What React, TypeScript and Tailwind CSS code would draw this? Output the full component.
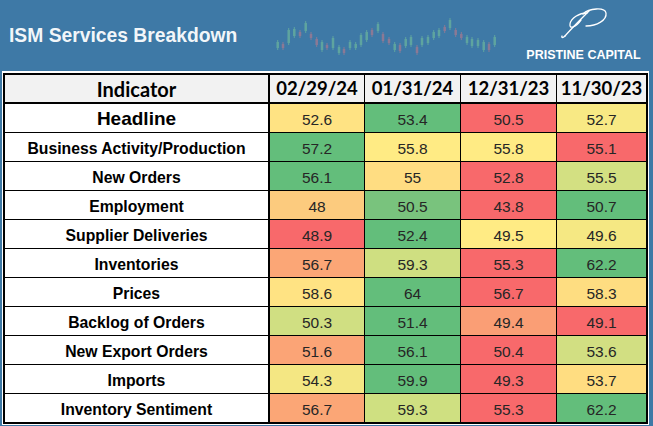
import React from "react";

type Cell = [string, string];
type Row = { label: string; big?: boolean; vals: Cell[] };

const G = "#63BE7B";
const R = "#F8696B";
const Y = "#FFEB84";

const rows: Row[] = [
  { label: "Headline", big: true, vals: [["52.6", "#FFE383"], ["53.4", G], ["50.5", R], ["52.7", "#F8E984"]] },
  { label: "Business Activity/Production", vals: [["57.2", G], ["55.8", Y], ["55.8", Y], ["55.1", R]] },
  { label: "New Orders", vals: [["56.1", G], ["55", "#FFDD82"], ["52.8", R], ["55.5", "#D3E082"]] },
  { label: "Employment", vals: [["48", "#FCCB7E"], ["50.5", "#79C37D"], ["43.8", R], ["50.7", G]] },
  { label: "Supplier Deliveries", vals: [["48.9", R], ["52.4", G], ["49.5", Y], ["49.6", "#F5E883"]] },
  { label: "Inventories", vals: [["56.7", "#FBA676"], ["59.3", "#CFDF81"], ["55.3", R], ["62.2", G]] },
  { label: "Prices", vals: [["58.6", "#FFE383"], ["64", G], ["56.7", R], ["58.3", "#FEDD81"]] },
  { label: "Backlog of Orders", vals: [["50.3", "#D0DF82"], ["51.4", G], ["49.4", "#FA9E75"], ["49.1", R]] },
  { label: "New Export Orders", vals: [["51.6", "#FBA476"], ["56.1", G], ["50.4", R], ["53.6", "#D2DF82"]] },
  { label: "Imports", vals: [["54.3", "#F4E783"], ["59.9", G], ["49.3", R], ["53.7", "#FFDD81"]] },
  { label: "Inventory Sentiment", vals: [["56.7", "#FBA676"], ["59.3", "#CFE081"], ["55.3", R], ["62.2", G]] },
];

const dates = ["02/29/24", "01/31/24", "12/31/23", "11/30/23"];

const candles: [number, number, number, number][] = [
  [277.7, 40, 50, 0], [283, 42, 50, 1], [288.7, 28, 45, 0], [294.3, 27, 38, 0], [300, 30, 38, 1],
  [305.7, 21, 33, 0], [311, 32, 40, 1], [316.7, 37, 47, 1], [322, 40, 52, 0], [327, 43, 50, 1],
  [333, 36, 50, 0], [339, 45, 55, 0], [344, 47, 55, 1], [350, 40, 50, 0], [355.7, 42, 50, 0],
  [361, 33, 47, 0], [366.7, 30, 42, 0], [372, 28, 37, 1], [378, 22, 33, 0], [383, 32, 43, 1],
  [389, 37, 45, 1], [394.7, 42, 52, 0], [400, 43, 53, 1], [405.7, 37, 48, 0], [411, 35, 47, 0],
  [417, 45, 55, 1], [422, 36, 47, 0], [428, 35, 45, 0], [433.7, 30, 40, 0], [439, 28, 38, 0],
  [444.7, 25, 33, 1], [450, 18, 30, 0], [455.7, 28, 37, 1], [461.3, 32, 40, 1], [467, 35, 45, 0],
  [472, 37, 48, 0], [478, 38, 48, 0], [483.7, 40, 52, 0], [489, 42, 52, 1], [494.7, 35, 47, 0],
];

const colBorders = ["border-r-2", "border-r", "border-r", "border-r", ""];

export default function App() {
  return (
    <div className="w-[653px] h-[426px] bg-[#3E79A6] overflow-hidden" style={{ fontFamily: '"Liberation Sans", Arial, sans-serif' }}>
      {/* header */}
      <div className="h-[71px] flex">
        <div className="w-[266px] pl-[9px] flex items-center">
          <span className="text-[19.3px] font-bold text-white/95 leading-none pt-[1px]">ISM Services Breakdown</span>
        </div>
        <svg width="240" height="71" viewBox="266 0 240 71">
          {candles.map(([x, t, b, r], i) => (
            <g key={i} opacity={r ? 0.5 : 0.5}>
              <line x1={x} x2={x} y1={t} y2={b} stroke={r ? "#d77a86" : "#7fcf9a"} strokeWidth="1" />
              <rect x={x - 1.25} y={t + 2} width="2.5" height={Math.max(b - t - 4, 2)} fill={r ? "#d77a86" : "#7fcf9a"} />
            </g>
          ))}
        </svg>
        <div className="flex-1 flex flex-col items-center pl-[8px]">
          <svg width="50" height="34" viewBox="0 0 50 34" className="mt-[5px]" fill="none" stroke="#ffffff" strokeWidth="1.3" strokeLinecap="round">
            <path d="M6 31 C12 24, 22 14, 30 6" />
            <path d="M24 9 C30 3, 46 2, 47 8 C48 15, 38 21, 27 21" />
            <path d="M28 8 C20 8, 12 13, 11 19 C10 25, 17 22, 22 15" />
            <path d="M6 31 C4 33, 2 33, 3 31" />
          </svg>
          <span className="text-[12.5px] font-bold text-white leading-none mt-[10px]">PRISTINE CAPITAL</span>
        </div>
      </div>
      {/* table */}
      <div className="ml-[2px] w-[647px] border-t-2 border-x border-b border-white">
        <div className="border-2 border-black bg-white grid grid-cols-[265px_95px_96px_96px_89px]">
          {["Indicator", ...dates].map((h, i) => (
            <div
              key={h}
              className={`h-[29px] bg-[#F2F2F2] border-b-2 border-black ${colBorders[i]} flex items-center justify-center font-bold text-black ${i === 0 ? "text-[20px]" : "text-[18.5px]"}`}
              style={{ fontFamily: 'Lato, "Open Sans", sans-serif' }}
            >
              {h}
            </div>
          ))}
          {rows.map((row, ri) => {
            const last = ri === rows.length - 1;
            return (
              <React.Fragment key={row.label}>
                <div
                  className={`${last ? "h-[28px]" : "h-[29px] border-b"} border-black border-r-2 flex items-center justify-center pt-[3px] font-bold text-black ${row.big ? "text-[19px]" : "text-[15.75px]"}`}
                >
                  {row.label}
                </div>
                {row.vals.map(([v, c], ci) => (
                  <div
                    key={ci}
                    className={`${last ? "h-[28px]" : "h-[29px] border-b"} border-black ${colBorders[ci + 1]} flex items-center justify-center pt-[3px] text-[15.5px] text-[#262626]`}
                    style={{ backgroundColor: c }}
                  >
                    {v}
                  </div>
                ))}
              </React.Fragment>
            );
          })}
        </div>
      </div>
    </div>
  );
}
